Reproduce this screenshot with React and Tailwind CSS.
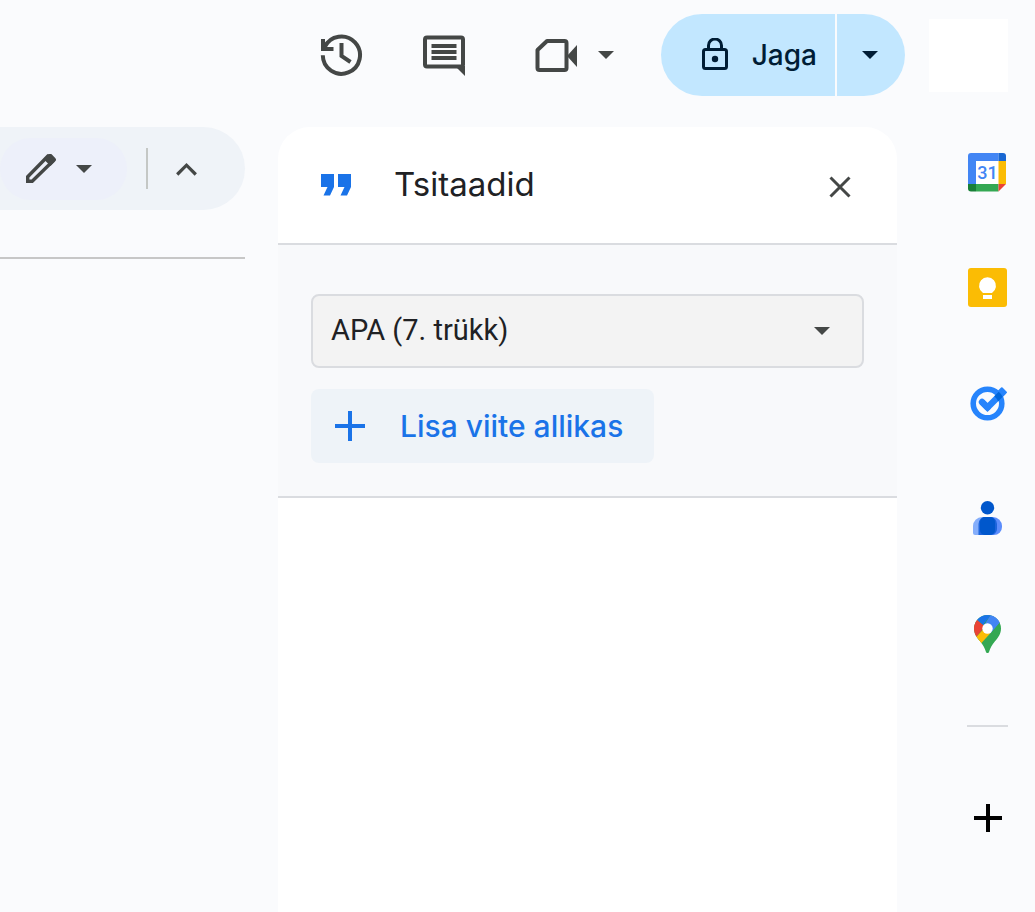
import React from "react";

const ICON = "text-[#444746]";

function Caret({ className = "" }) {
  return (
    <svg width="16" height="8" viewBox="0 0 16 8" className={className} fill="currentColor" aria-hidden="true">
      <path d="M0 0h16L8 8z" />
    </svg>
  );
}

function HistoryIcon() {
  return (
    <svg width="46" height="46" viewBox="0 0 46 46" fill="none" stroke="currentColor" strokeWidth="4" aria-hidden="true">
      <path d="M4.8 23.3A18.6 18.6 0 1 0 6.6 15.2" />
      <path d="M5 7v10h10.500" />
      <path d="M23.500 11v13l9 6" />
    </svg>
  );
}

function CommentIcon() {
  return (
    <svg width="46" height="46" viewBox="0 0 46 46" fill="none" aria-hidden="true">
      <rect x="4" y="5.500" width="38" height="29" rx="2" stroke="currentColor" strokeWidth="4" />
      <path d="M34 34h10v10z" fill="currentColor" />
      <path d="M10.500 14h25M10.500 20h25M10.500 26h25" stroke="currentColor" strokeWidth="4" />
    </svg>
  );
}

function VideoIcon() {
  return (
    <svg width="46" height="46" viewBox="0 0 46 46" fill="none" aria-hidden="true">
      <path d="M13 9h17.500a2 2 0 0 1 2 2v25a2 2 0 0 1-2 2h-25a2 2 0 0 1-2-2V18z" stroke="currentColor" strokeWidth="4" strokeLinejoin="round" />
      <path d="M33 24l10-11v22z" fill="currentColor" />
    </svg>
  );
}

function LockIcon() {
  return (
    <svg width="26" height="34" viewBox="0 0 26 34" fill="none" stroke="currentColor" strokeWidth="3" aria-hidden="true">
      <rect x="1.500" y="11.500" width="23" height="19" rx="2" />
      <path d="M6.500 11V7.500a6.500 6.500 0 0 1 13 0V11" />
      <circle cx="13" cy="21" r="3.200" fill="currentColor" stroke="none" />
    </svg>
  );
}

function PencilIcon() {
  return (
    <svg width="30" height="30" viewBox="0 0 30 30" fill="none" aria-hidden="true">
      <path d="M1.700 27.300v-4.500L21.500 2.500l5 5L6.200 27.300z" stroke="currentColor" strokeWidth="3.400" />
      <path d="M17.500 5L22.200.3a2.400 2.400 0 0 1 3.400 0l3.600 3.600a2.400 2.400 0 0 1 0 3.400L24.500 12z" fill="currentColor" />
    </svg>
  );
}

function CalendarIcon() {
  return (
    <svg width="40" height="40" viewBox="0 0 40 40" aria-hidden="true">
      <path d="M8 8h23v23H8z" fill="#fff" />
      <path d="M3 0h27.500v8H8v23H0V3a3 3 0 0 1 3-3z" fill="#4285f4" />
      <path d="M30.500 0H35a3 3 0 0 1 3 3v5h-7.500z" fill="#1967d2" />
      <path d="M30.500 8H38v23h-7.500z" fill="#fbbc04" />
      <path d="M8 31h22.500v7.500H8z" fill="#34a853" />
      <path d="M0 31h8v7.500H3a3 3 0 0 1-3-3z" fill="#188038" />
      <path d="M30.500 31H38l-7.500 7.500z" fill="#ea4335" />
      <text x="19.500" y="26" textAnchor="middle" fontSize="18" fontWeight="500" fill="#4285f4" className="font-['Roboto',sans-serif]">31</text>
    </svg>
  );
}

function KeepIcon() {
  return (
    <svg width="40" height="40" viewBox="0 0 40 40" aria-hidden="true">
      <rect width="39" height="39" rx="3" fill="#fbbc04" />
      <path d="M15 25a8.500 8.500 0 1 1 9 0z" fill="#fff" />
      <path d="M15 27h9v4h-9z" fill="#fff" />
    </svg>
  );
}

function TasksIcon() {
  return (
    <svg width="40" height="40" viewBox="0 0 40 40" fill="none" aria-hidden="true">
      <circle cx="19.500" cy="20.500" r="14.300" stroke="#2684fc" strokeWidth="5.600" />
      <path d="M14 19l5.500 5.500L35.500 8.500" stroke="#2684fc" strokeWidth="6.400" />
      <path d="M14 19l5.500 5.500" stroke="#2684fc" strokeWidth="6.400" strokeLinecap="round" />
      <path d="M33.800 5.200l4.200 4.200-3.500 3.500-4.200-4.200z" fill="#2684fc" stroke="#2684fc" strokeWidth="2" strokeLinejoin="round" />
      <path d="M26.300 13.200l4.400-4.400q2.500 2 4 5l-4.600 4.600q-1.300-3.200-3.800-5.200z" fill="#0066da" />
    </svg>
  );
}

function ContactsIcon() {
  return (
    <svg width="40" height="40" viewBox="0 0 40 40" aria-hidden="true">
      <circle cx="19.500" cy="9.800" r="6.700" fill="#0057cc" />
      <path d="M14 19h11v18H7a2 2 0 0 1-2-2v-7a9 9 0 0 1 9-9z" fill="#85aefb" />
      <path d="M15 19h10a9 9 0 0 1 9 9v1a8 8 0 0 1-8 8H15z" fill="#5c8dfc" />
      <path d="M10.500 37v-11a7 7 0 0 1 7-7H22a7 7 0 0 1 7 7v5a6 6 0 0 1-6 6z" fill="#1c64dc" />
      <rect x="12" y="19" width="15" height="18" rx="5" fill="#0057cc" />
    </svg>
  );
}

function MapsIcon() {
  return (
    <svg width="40" height="40" viewBox="0 0 40 40" aria-hidden="true">
      <defs>
        <clipPath id="pin">
          <path d="M19.500 2A13.500 13.500 0 0 0 6 15.500c0 5.500 2.800 9 6 12.800 3.200 3.700 4.700 6.700 5.800 10.200.6 2 2.800 2 3.400 0 1.100-3.500 2.600-6.500 5.800-10.200 3.200-3.800 6-7.300 6-12.800A13.500 13.500 0 0 0 19.500 2z" />
        </clipPath>
      </defs>
      <g clipPath="url(#pin)">
        <path d="M0 0h40v40H0z" fill="#34a853" />
        <path d="M23.500 0H36v4.500L22.500 20l-6-8z" fill="#4285f4" />
        <path d="M8 24l11.500-12 3.500 7.500L13 30.500z" fill="#fbbc04" />
        <path d="M31.800 9.300L38 2H24l-8 10 6 8.500z" fill="#4285f4" />
        <path d="M0 0h9v6.800l8 6.700L7.300 25H0z" fill="#ea4335" />
        <path d="M9 6.800L19.500 15.500 15.800 11 23.600 1V-1H5z" fill="#1a73e8" />
      </g>
      <circle cx="19.500" cy="15.500" r="5.200" fill="#fff" />
    </svg>
  );
}

const apps = [
  { name: "Calendar", Icon: CalendarIcon },
  { name: "Keep", Icon: KeepIcon },
  { name: "Tasks", Icon: TasksIcon },
  { name: "Contacts", Icon: ContactsIcon },
  { name: "Maps", Icon: MapsIcon },
];

function TopBar() {
  return (
    <header className={`flex items-center justify-end pt-3.5 pr-[27px] ${ICON}`}>
      <button type="button" aria-label="Ajalugu" className="mr-[57px]"><HistoryIcon /></button>
      <button type="button" aria-label="Kommentaarid" className="mr-[67px]"><CommentIcon /></button>
      <button type="button" aria-label="Videokõne" className="mr-[47px] flex items-center gap-[18px]">
        <VideoIcon />
        <Caret />
      </button>
      <div className="mr-6 flex h-[82px] gap-0.5 text-[#001d35]">
        <button type="button" className="flex items-center gap-6 rounded-l-full bg-[#c2e7ff] pr-[18px] pl-[41px] text-[28px] font-medium">
          <LockIcon />
          Jaga
        </button>
        <button type="button" aria-label="Jagamise valikud" className="flex w-[68px] items-center rounded-r-full bg-[#c2e7ff] pl-[25px]">
          <Caret />
        </button>
      </div>
      <div className="h-[73px] w-[79px] bg-white" />
    </header>
  );
}

function Toolbar() {
  return (
    <div className={`w-[245px] shrink-0 ${ICON}`}>
      <div className="flex h-[83px] items-center rounded-r-full bg-[#eff3f8]">
        <button type="button" aria-label="Muutmisrežiim" className="flex h-[62px] w-[127px] items-center gap-5 rounded-full bg-[#edf0fa] pl-[26px]">
          <PencilIcon />
          <Caret />
        </button>
        <div className="ml-[19px] h-[41px] w-0.5 bg-[#c4c7c5]" />
        <button type="button" aria-label="Peida menüüd" className="ml-7">
          <svg width="21" height="14" viewBox="0 0 21 14" fill="none" stroke="currentColor" strokeWidth="3.200" aria-hidden="true">
            <path d="M1.200 12.500l9.300-9.300 9.300 9.300" />
          </svg>
        </button>
      </div>
      <div className="mt-[47px] h-0.5 bg-[#c7c7c7]" />
    </div>
  );
}

function CitationsPanel() {
  return (
    <section className="ml-[33px] flex min-w-0 flex-1 flex-col overflow-hidden rounded-t-[32px] bg-white">
      <div className="flex h-[118px] items-center border-b-2 border-[#dadce0] pr-[46px] pl-[43px]">
        <svg width="30" height="22" viewBox="0 0 30 22" fill="#1a73e8" aria-hidden="true">
          <path d="M0 0h13v13L9 21.500H2.500L6.500 13H0zM17 0h13v13l-4 8.500h-6.500l4-8.500H17z" />
        </svg>
        <h1 className="ml-[43px] text-[33px] text-[#202124]">Tsitaadid</h1>
        <button type="button" aria-label="Sulge" className={`ml-auto pt-1 ${ICON}`}>
          <svg width="22" height="22" viewBox="0 0 22 22" fill="none" stroke="currentColor" strokeWidth="3" aria-hidden="true">
            <path d="M1.500 1.500l19 19M20.500 1.500l-19 19" />
          </svg>
        </button>
      </div>
      <div className="border-b-2 border-[#dadce0] bg-[#f8f9fb] px-[33px] pt-[49px] pb-[33px]">
        <div className="relative">
          <select aria-label="Viitamisstiil" className="h-[74px] w-full appearance-none rounded-lg border-2 border-[#dadce0] bg-[#f3f3f3] px-[18px] font-['Roboto',sans-serif] text-[29px] text-[#202124]">
            <option>APA (7. trükk)</option>
          </select>
          <Caret className={`pointer-events-none absolute top-[33px] right-[34px] ${ICON}`} />
        </div>
        <button type="button" className="mt-[21px] flex h-[74px] items-center gap-[35px] rounded-lg bg-[#eef3f8] pr-[31px] pl-6 text-[30px] font-medium text-[#1a73e8]">
          <svg width="30" height="30" viewBox="0 0 30 30" stroke="currentColor" strokeWidth="4" aria-hidden="true">
            <path d="M15 0v30M0 15h30" />
          </svg>
          Lisa viite allikas
        </button>
      </div>
    </section>
  );
}

function SideRail() {
  return (
    <aside className="flex w-[138px] shrink-0 flex-col items-center pt-[26px] pl-[43px]">
      <div className="flex flex-col gap-[75px]">
        {apps.map(({ name, Icon }) => (
          <button key={name} type="button" aria-label={name} className="size-10"><Icon /></button>
        ))}
      </div>
      <div className="mt-[72px] h-0.5 w-[41px] bg-[#dadce0]" />
      <button type="button" aria-label="Hangi lisandmooduleid" className="mt-[77px] text-black">
        <svg width="28" height="28" viewBox="0 0 28 28" stroke="currentColor" strokeWidth="4" aria-hidden="true">
          <path d="M14 0v28M0 14h28" />
        </svg>
      </button>
    </aside>
  );
}

export default function App() {
  return (
    <div className="flex min-h-screen flex-col bg-[#fafbfd] font-['Inter',sans-serif]">
      <TopBar />
      <main className="mt-[31px] flex flex-1">
        <Toolbar />
        <CitationsPanel />
        <SideRail />
      </main>
    </div>
  );
}
